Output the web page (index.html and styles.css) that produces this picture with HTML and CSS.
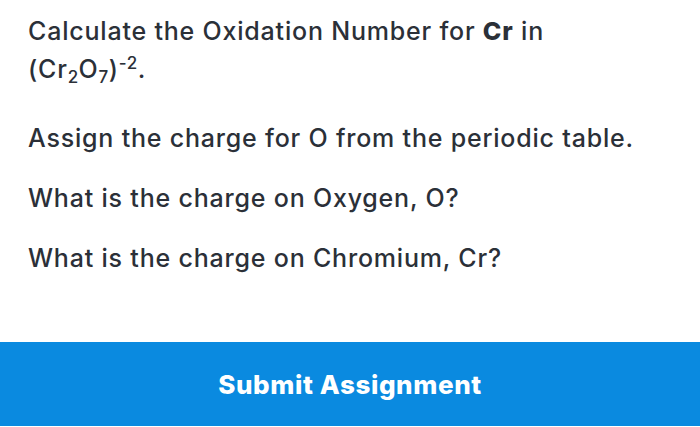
FILE: index.html
```html
<!DOCTYPE html>
<html>
<head>
<meta charset="utf-8">
<link rel="stylesheet" href="styles.css">
</head>
<body>
<div class="page">
  <main class="content">
    <p class="title">Calculate the Oxidation Number for <b>Cr</b> in (Cr<sub>2</sub>O<sub>7</sub>)<sup>-2</sup>.</p>
    <p class="q">Assign the charge for O from the periodic table.</p>
    <p class="q">What is the charge on Oxygen, O?</p>
    <p class="q">What is the charge on Chromium, Cr?</p>
  </main>
  <button class="submit">Submit Assignment</button>
</div>
</body>
</html>
```
FILE: styles.css
```css
* { box-sizing: border-box; }
html, body { margin: 0; padding: 0; background: #fff; }
.page {
  width: 700px;
  height: 427px;
  display: flex;
  flex-direction: column;
  font-family: Inter, "Noto Sans", sans-serif;
  color: #2b3038;
}
.content {
  flex: 1;
  padding: 12px 28px 0;
}
.title {
  margin: 0;
  font-size: 25px;
  line-height: 38px;
  font-weight: 500;
  letter-spacing: 0.8px;
  width: 560px;
}
.title b { font-weight: 800; }
.title sub, .title sup { font-size: 17px; line-height: 0; letter-spacing: 0.5px; }
.title sub { vertical-align: -5px; }
.title sup { vertical-align: 9px; }
.q {
  margin: 0;
  font-size: 25px;
  line-height: 60px;
  font-weight: 500;
  letter-spacing: 0.8px;
}
.content .title + .q { margin-top: 20px; }
.submit {
  height: 84px;
  margin-bottom: 1px;
  border: none;
  background: #0a8ae0;
  color: #fff;
  font-family: Inter, "Noto Sans", sans-serif;
  font-size: 26px;
  font-weight: 800;
  letter-spacing: 0.6px;
  padding: 0;
  width: 100%;
}
```
